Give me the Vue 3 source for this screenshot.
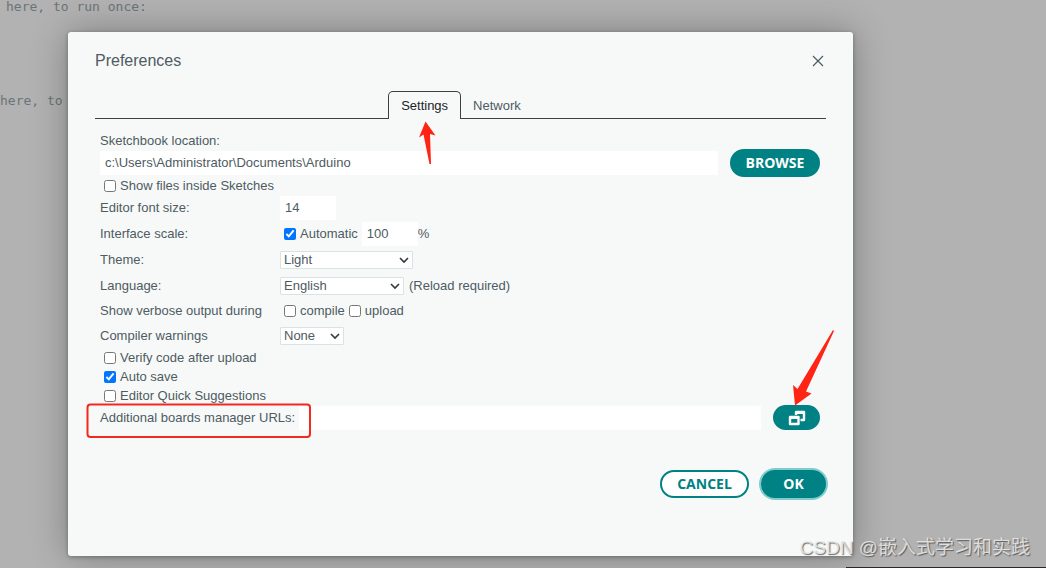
<script setup>
import { ref } from 'vue'

const location = ref('c:\\Users\\Administrator\\Documents\\Arduino')
const showFiles = ref(false)
const fontSize = ref('14')
const autoScale = ref(true)
const scale = ref('100')
const theme = ref('Light')
const language = ref('English')
const compile = ref(false)
const upload = ref(false)
const warnings = ref('None')
const verify = ref(false)
const autoSave = ref(true)
const suggestions = ref(false)
const urls = ref('')
</script>

<template>
  <div class="screen">
    <pre class="code" aria-hidden="true"><span class="line first">here, to run once:</span><span class="line">here, to</span></pre>

    <div class="dialog" role="dialog" aria-labelledby="title">
      <header class="head">
        <h1 id="title">Preferences</h1>
        <button class="close" type="button" aria-label="Close">
          <svg width="12" height="12" viewBox="0 0 12 12"><path d="M1 1L11 11M11 1L1 11" /></svg>
        </button>
      </header>

      <div class="tabs" role="tablist">
        <div class="rule grow"></div>
        <button class="tab active" type="button" role="tab" aria-selected="true">Settings</button>
        <button class="tab" type="button" role="tab" aria-selected="false">Network</button>
        <div class="rule grow"></div>
      </div>

      <form class="form" @submit.prevent>
        <label class="top-label" for="location">Sketchbook location:</label>
        <div class="row">
          <input id="location" v-model="location" class="field fill" type="text" />
          <button class="pill browse" type="button">BROWSE</button>
        </div>
        <label class="check"><input v-model="showFiles" type="checkbox" />Show files inside Sketches</label>

        <div class="row">
          <label class="name" for="size">Editor font size:</label>
          <input id="size" v-model="fontSize" class="field small" type="text" />
        </div>
        <div class="row">
          <span class="name">Interface scale:</span>
          <label class="inline"><input v-model="autoScale" type="checkbox" />Automatic</label>
          <input v-model="scale" class="field small scale" type="text" aria-label="Interface scale percent" />
          <span>%</span>
        </div>
        <div class="row">
          <label class="name" for="theme">Theme:</label>
          <span class="select theme">
            <select id="theme" v-model="theme"><option>Light</option><option>Dark</option></select>
            <svg width="10" height="7" viewBox="0 0 10 7"><path d="M1 1L5 5L9 1" /></svg>
          </span>
        </div>
        <div class="row compact">
          <label class="name" for="language">Language:</label>
          <span class="select language">
            <select id="language" v-model="language"><option>English</option></select>
            <svg width="10" height="7" viewBox="0 0 10 7"><path d="M1 1L5 5L9 1" /></svg>
          </span>
          <span class="note">(Reload required)</span>
        </div>
        <div class="row compact">
          <span class="name">Show verbose output during</span>
          <label class="inline"><input v-model="compile" type="checkbox" />compile</label>
          <label class="inline"><input v-model="upload" type="checkbox" />upload</label>
        </div>
        <div class="row compact">
          <label class="name" for="warnings">Compiler warnings</label>
          <span class="select warnings">
            <select id="warnings" v-model="warnings"><option>None</option><option>All</option></select>
            <svg width="10" height="7" viewBox="0 0 10 7"><path d="M1 1L5 5L9 1" /></svg>
          </span>
        </div>

        <label class="check"><input v-model="verify" type="checkbox" />Verify code after upload</label>
        <label class="check"><input v-model="autoSave" type="checkbox" />Auto save</label>
        <label class="check"><input v-model="suggestions" type="checkbox" />Editor Quick Suggestions</label>
        <div class="row compact urls">
          <label for="urls">Additional boards manager URLs:</label>
          <input id="urls" v-model="urls" class="field fill" type="text" />
          <button class="pill open" type="button" aria-label="Edit URLs">
            <svg width="18" height="16" viewBox="0 0 18 16">
              <path class="icon" d="M8 5V2H16V10H12.500" />
              <path class="icon" d="M2 7H10.500V14H2Z" />
              <path class="bar" d="M2 7.500H10.500M8 2.500H16" />
            </svg>
          </button>
        </div>
      </form>

      <footer class="actions">
        <button class="pill cancel" type="button">CANCEL</button>
        <button class="pill ok" type="button">OK</button>
      </footer>
    </div>

    <svg class="marks" width="1046" height="568" viewBox="0 0 1046 568" aria-hidden="true">
      <path d="M425.5 121.5L435.5 135.5L430 134L431 164H429.500L423.500 134.500L419 137.500Z" />
      <path d="M795 405.500L793 385L797.500 389L833 330L834 331L806 391.500L811.500 393.500Z" />
      <rect x="87.500" y="404.500" width="222.500" height="32.500" rx="3" />
    </svg>
    <div class="strip"></div>
    <div class="watermark">CSDN @嵌入式学习和实践</div>
  </div>
</template>

<style>
body {
  background: #b2b2b2;
}
</style>

<style scoped>
.screen {
  position: relative;
  min-height: 100vh;
  box-sizing: border-box;
  padding: 32px 193px 12px 68px;
  overflow: hidden;
  background: #b2b2b2;
  color: #4e5b61;
  font: 13px/18px "Liberation Sans", Arial, sans-serif;
}
.code {
  position: absolute;
  top: -2px;
  left: 0;
  display: flex;
  flex-direction: column;
  gap: 76px;
  margin: 0;
  color: #6b7476;
  font: 13px/18px "DejaVu Sans Mono", monospace;
}
.first {
  padding-left: 6px;
}
.dialog {
  position: relative;
  box-sizing: border-box;
  padding: 18px 27px 58px;
  border-radius: 3px;
  background: #f7f9f9;
  box-shadow: 0 0 36px rgba(0, 0, 0, 0.3), 0 1px 4px rgba(0, 0, 0, 0.3);
}
.head {
  display: flex;
  align-items: center;
  justify-content: space-between;
  height: 22px;
}
h1 {
  margin: 0;
  font-size: 16px;
  font-weight: 400;
  line-height: 22px;
}
button {
  font: inherit;
  cursor: pointer;
}
.close {
  display: flex;
  padding: 2px;
  border: 0;
  background: none;
}
.close path {
  fill: none;
  stroke: #4e5b61;
  stroke-width: 1.2;
}
.tabs {
  display: flex;
  height: 28px;
  margin-top: 19px;
}
.rule {
  border-bottom: 1px solid #374146;
}
.grow {
  flex: 1 1 0;
}
.grow:first-child {
  flex: 0 1 40.1%;
}
.tab {
  box-sizing: border-box;
  padding: 3px 12px 0;
  border: 0;
  border-bottom: 1px solid #374146;
  background: none;
  color: #4e5b61;
}
.active {
  padding: 0 12px;
  border: 1px solid #374146;
  border-bottom: 0;
  border-radius: 5px 5px 0 0;
  color: #1c2427;
}
.form {
  display: flex;
  flex-direction: column;
  padding: 13px 6px 0 5px;
}
.top-label {
  line-height: 18px;
}
.row {
  display: flex;
  align-items: center;
  height: 26px;
}
.compact {
  height: 25px;
}
.name {
  flex: 0 0 180px;
}
.field {
  box-sizing: border-box;
  height: 24px;
  padding: 0 5px 1px;
  border: 0;
  background: #fff;
  color: #4e5b61;
  font: inherit;
  outline: none;
}
.fill {
  flex: 1 1 0;
  min-width: 0;
  margin-right: 12px;
}
.small {
  width: 56px;
}
.scale {
  margin-left: 4px;
}
input[type="checkbox"] {
  width: 12px;
  height: 12px;
  margin: 0 4px;
  accent-color: #0075ff;
}
.check,
.inline {
  display: flex;
  align-items: center;
}
.check {
  height: 19px;
}
.select {
  position: relative;
  display: flex;
}
.select select {
  width: 100%;
  height: 18px;
  padding: 0 3px;
  border: 1px solid #dae3e3;
  border-radius: 1px;
  appearance: none;
  background: #fff;
  color: #4e5b61;
  font: inherit;
  line-height: 16px;
}
.select svg {
  position: absolute;
  top: 6px;
  right: 4px;
  pointer-events: none;
}
.select path {
  fill: none;
  stroke: #303b3f;
  stroke-width: 1.6;
}
.theme {
  width: 133px;
}
.language {
  width: 124px;
}
.warnings {
  width: 64px;
}
.note {
  margin-left: 5px;
}
.pill {
  display: flex;
  align-items: center;
  justify-content: center;
  box-sizing: border-box;
  height: 28px;
  padding: 0;
  border: 2px solid #008184;
  border-radius: 14px;
  background: #008184;
  color: #fff;
  font: 700 14px/20px "Open Sans", sans-serif;
}
.browse {
  width: 90px;
}
.open {
  width: 47px;
  height: 25px;
}
.urls .field {
  margin-left: 4px;
}
.icon {
  fill: none;
  stroke: #fff;
  stroke-width: 2.4;
  stroke-linejoin: round;
}
.bar {
  stroke: #fff;
  stroke-width: 3;
}
.actions {
  display: flex;
  justify-content: flex-end;
  gap: 12px;
  margin-top: 40px;
}
.cancel {
  width: 89px;
  background: #fff;
  color: #008184;
}
.ok {
  width: 65px;
  box-shadow: 0 0 0 2px #7fcbcd;
}
.marks {
  position: absolute;
  top: 0;
  left: 0;
  pointer-events: none;
}
.marks path {
  fill: #ff2414;
}
.marks rect {
  fill: none;
  stroke: #f3281e;
  stroke-width: 2;
}
.strip {
  position: absolute;
  right: 0;
  bottom: 0;
  width: 200px;
  height: 1px;
  background: #2c2829;
}
.watermark {
  position: absolute;
  right: 16px;
  bottom: 8px;
  color: rgba(235, 235, 235, 0.85);
  font: 19px/24px "Liberation Sans", "Noto Sans CJK SC", sans-serif;
  text-shadow: 1px 1px 1px rgba(70, 70, 70, 0.8);
  white-space: nowrap;
}
</style>
